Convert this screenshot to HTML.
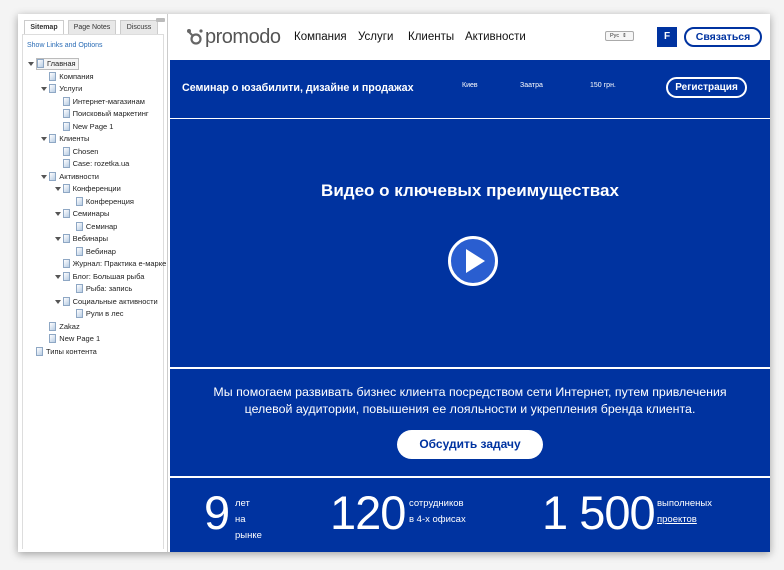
<!DOCTYPE html>
<html><head><meta charset="utf-8"><style>
*{margin:0;padding:0;box-sizing:border-box}
body{width:784px;height:570px;background:#f4f4f4;font-family:"Liberation Sans",Arial,sans-serif;position:relative;overflow:hidden}
.frame{position:absolute;left:18px;top:14px;width:752px;height:538px;background:#fff;box-shadow:0 2px 8px rgba(0,0,0,.35)}
.side{position:absolute;left:18px;top:14px;width:150px;height:538px;background:#fff;border-right:1px solid #ccc}
.tab{position:absolute;top:0;height:14px;font-size:7px;line-height:14px;text-align:center;color:#333;background:#e8e8e8;border:1px solid #ccc;border-bottom:none}
.tab.a{background:#fff;font-weight:bold}
.sb{position:absolute;left:4px;top:20px;width:142px;height:515px;border:1px solid #ddd;border-bottom:none}
.link{position:absolute;left:9px;top:28px;font-size:7px;color:#2a6cb6}
.row{position:absolute;font-size:7.5px;color:#222;height:12px;line-height:12px;white-space:nowrap}
.ic{display:inline-block;width:7px;height:9px;background:linear-gradient(135deg,#fff,#b9cde4);border:1px solid #8ea7c4;vertical-align:-2px;margin-right:3px}
.ar{position:absolute;width:0;height:0;border-left:3px solid transparent;border-right:3px solid transparent;border-top:4px solid #555;top:4px}
.main{position:absolute;left:170px;top:14px;width:600px;height:538px}
.hdr{position:absolute;left:0;top:0;width:600px;height:46px;background:#fff}
.nav{position:absolute;top:17px;font-size:11.5px;color:#111}
.blue{background:#0033a0;position:absolute;left:0;width:600px;color:#fff}
.btn{position:absolute;border:2px solid #fff;border-radius:12px;color:#fff;font-weight:bold;text-align:center}
</style></head><body>
<div class="frame"></div>
<div class="side">
 <div class="sb"></div>
 <div class="tab a" style="left:6px;top:6px;width:40px">Sitemap</div>
 <div class="tab" style="left:50px;top:6px;width:48px">Page Notes</div>
 <div class="tab" style="left:102px;top:6px;width:38px">Discuss</div>
 <div style="position:absolute;left:138px;top:4px;width:9px;height:4px;background:#bbb;border-radius:1px"></div>
 <div class="link">Show Links and Options</div>
 <div id="tree"></div>
</div>
<div class="main">
 <div class="hdr">
  <svg style="position:absolute;left:15px;top:14px" width="18" height="18" viewBox="0 0 18 18"><circle cx="4" cy="3" r="2" fill="#666"/><circle cx="11" cy="11" r="4.5" fill="none" stroke="#666" stroke-width="2.2"/><path d="M4 4 L8 8" stroke="#666" stroke-width="2"/><circle cx="16" cy="3" r="1.6" fill="#666"/></svg>
  <div style="position:absolute;left:35px;top:12px;font-size:20px;color:#555;letter-spacing:-0.5px">promodo</div>
  <div class="nav" style="left:124px">Компания</div>
  <div class="nav" style="left:188px">Услуги</div>
  <div class="nav" style="left:238px">Клиенты</div>
  <div class="nav" style="left:295px">Активности</div>
  <div style="position:absolute;left:435px;top:17px;width:29px;height:10px;border:1px solid #aaa;border-radius:2px;font-size:5.5px;line-height:8px;padding-left:4px;color:#333;background:#f6f6f6">Рус &nbsp;⇕</div>
  <div style="position:absolute;left:487px;top:13px;width:20px;height:20px;background:#0033a0;color:#fff;font-size:10px;font-weight:bold;text-align:center;line-height:20px">F</div>
  <div style="position:absolute;left:514px;top:13px;width:78px;height:20px;border:2px solid #0033a0;border-radius:11px;color:#0033a0;font-size:10.5px;font-weight:bold;text-align:center;line-height:16px">Связаться</div>
 </div>
 <div class="blue" style="top:46px;height:58px">
  <div style="position:absolute;left:12px;top:22px;font-size:10.7px;font-weight:bold">Семинар о юзабилити, дизайне и продажах</div>
  <div style="position:absolute;left:292px;top:22px;font-size:7px">Киев</div>
  <div style="position:absolute;left:350px;top:22px;font-size:7px">Заатра</div>
  <div style="position:absolute;left:420px;top:22px;font-size:7px">150 грн.</div>
  <div class="btn" style="left:496px;top:17px;width:81px;height:21px;font-size:10px;line-height:17px">Регистрация</div>
 </div>
 <div class="blue" style="top:105px;height:248px">
  <div style="position:absolute;left:0;width:600px;top:62px;text-align:center;font-size:17px;font-weight:bold">Видео о ключевых преимуществах</div>
  <svg style="position:absolute;left:277px;top:116px" width="52" height="52" viewBox="0 0 52 52"><circle cx="26" cy="26" r="23.5" fill="#2a5ed0" stroke="#fff" stroke-width="3"/><path d="M19 14 L38 26 L19 38Z" fill="#fff"/></svg>
 </div>
 <div class="blue" style="top:355px;height:107px">
  <div style="position:absolute;left:0;width:600px;top:15px;text-align:center;font-size:12.4px;line-height:17px">Мы помогаем развивать бизнес клиента посредством сети Интернет, путем привлечения<br>целевой аудитории, повышения ее лояльности и укрепления бренда клиента.</div>
  <div style="position:absolute;left:227px;top:61px;width:146px;height:29px;background:#fff;border-radius:15px;color:#0033a0;font-weight:bold;font-size:12px;text-align:center;line-height:29px">Обсудить задачу</div>
 </div>
 <div class="blue" style="top:464px;height:74px">
  <div style="position:absolute;left:34px;top:10px;font-size:47px;line-height:50px">9</div>
  <div style="position:absolute;left:65px;top:18px;font-size:9.5px;line-height:16px">лет<br>на<br>рынке</div>
  <div style="position:absolute;left:160px;top:10px;font-size:47px;line-height:50px;letter-spacing:-1px">120</div>
  <div style="position:absolute;left:239px;top:18px;font-size:9.5px;line-height:16px">сотрудников<br>в 4-х офисах</div>
  <div style="position:absolute;left:372px;top:10px;font-size:47px;line-height:50px;letter-spacing:-1px">1 500</div>
  <div style="position:absolute;left:487px;top:18px;font-size:9.5px;line-height:16px">выполненых<br><u>проектов</u></div>
 </div>
</div>
<script>
var r=[["Главная",0,1],["Компания",1],["Услуги",1,1],["Интернет-магазинам",2],["Поисковый маркетинг",2],["New Page 1",2],["Клиенты",1,1],["Chosen",2],["Case: rozetka.ua",2],["Активности",1,1],["Конференции",2,1],["Конференция",3],["Семинары",2,1],["Семинар",3],["Вебинары",2,1],["Вебинар",3],["Журнал: Практика е-марке",2],["Блог: Большая рыба",2,1],["Рыба: запись",3],["Социальные активности",2,1],["Рули в лес",3],["Zakaz",1],["New Page 1",1],["Типы контента",0]];
var h="";r.forEach(function(e,i){var x=18+e[1]*13.3,y=44+i*12.5;
if(e[2])h+='<div class="ar" style="left:'+(x-8)+'px;top:'+(y+4)+'px"></div>';
h+='<div class="row" style="left:'+x+'px;top:'+y+'px'+(i==0?';border:1px solid #bbb;padding-right:2px;background:#f5f5f5;line-height:10px':'')+'"><span class="ic"></span>'+e[0]+'</div>';});
document.getElementById("tree").innerHTML=h;
</script>
</body></html>
